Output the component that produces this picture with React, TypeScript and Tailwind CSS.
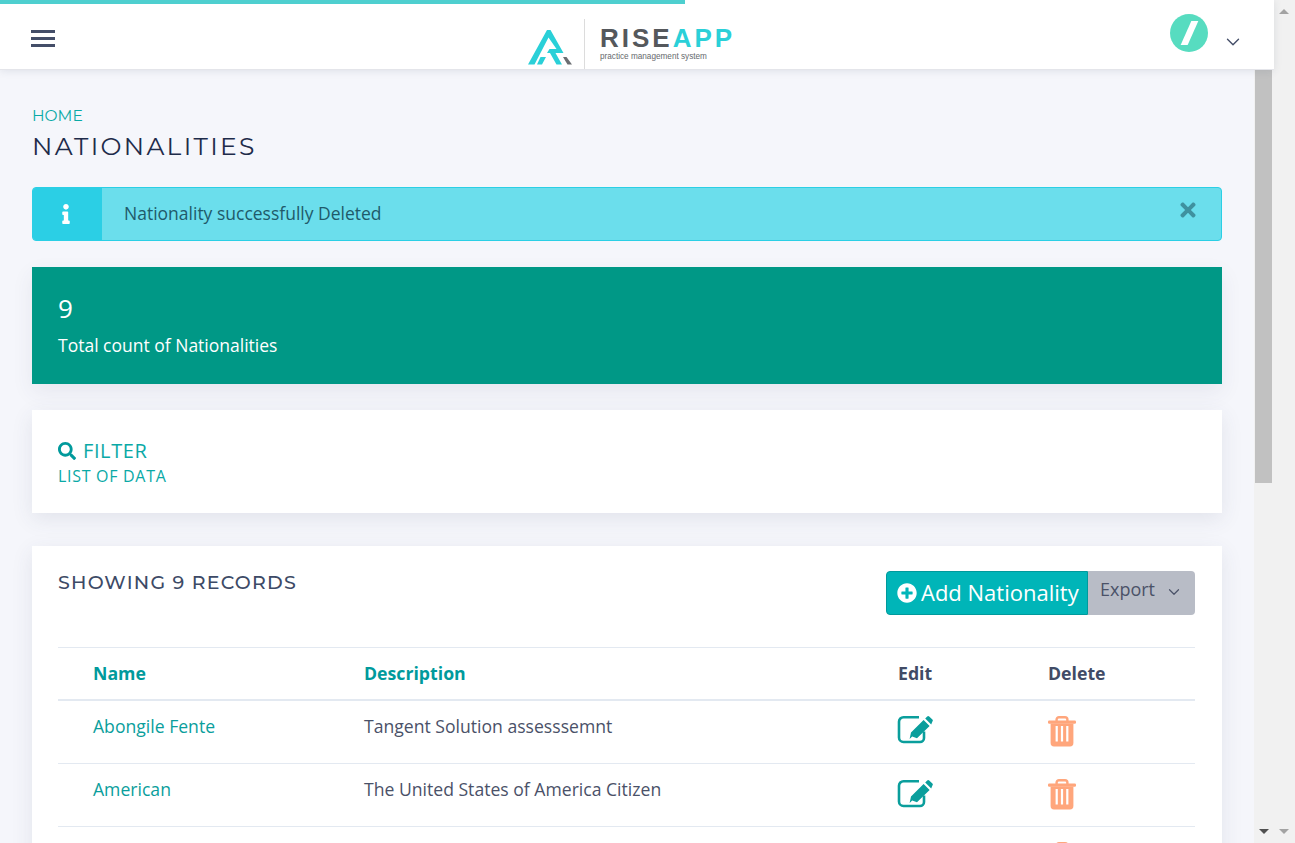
import { ChevronDown } from "lucide-react";
import { FaInfo, FaPlusCircle, FaSearch, FaTimes } from "react-icons/fa";

const rows = [
  { name: "Abongile Fente", description: "Tangent Solution assesssemnt" },
  { name: "American", description: "The United States of America Citizen" },
  { name: "", description: "" },
];

const EditIcon = () => (
  <svg width="36" height="30" viewBox="0 0 36 30" className="block ml-[-1px] mb-[3px]">
    <path d="M22 2.2 H6.5 a4.5 4.5 0 0 0 -4.5 4.5 V22.5 a4.5 4.5 0 0 0 4.5 4.5 H23 a4 4 0 0 0 4 -4 V16.5" fill="none" stroke="#0a9e9c" strokeWidth="2.6" />
    <path d="M12.6 24 L14 17.6 L26.6 5 L32.6 11 L20 23.2 L15.2 21.4 Z" fill="#0a9e9c" />
    <path d="M28.2 3.4 L30.2 1.4 a1.5 1.5 0 0 1 2 0 L35.4 4.6 a1.5 1.5 0 0 1 0 2 L34.2 9.4 Z" fill="#0a9e9c" />
  </svg>
);

const TrashIcon = () => (
  <svg width="28" height="31" viewBox="0 0 28 31" className="block mb-[1px]">
    <path d="M8.6 5 V3.6 a2.4 2.4 0 0 1 2.4 -2.4 h6 a2.4 2.4 0 0 1 2.4 2.4 V5" fill="none" stroke="#ffa67c" strokeWidth="2.4" />
    <rect x="0" y="4.4" width="28" height="3.4" rx="1.2" fill="#ffa67c" />
    <path d="M2.6 7.5 H25.4 V27 a3.4 3.4 0 0 1 -3.4 3.4 H6 a3.4 3.4 0 0 1 -3.4 -3.4 Z" fill="#ffa67c" />
    <rect x="7.6" y="10" width="2.2" height="15.5" fill="#fff" />
    <rect x="12.9" y="10" width="2.2" height="15.5" fill="#fff" />
    <rect x="18.2" y="10" width="2.2" height="15.5" fill="#fff" />
  </svg>
);

const Logo = () => (
  <div className="flex items-center h-[50px]">
    <svg width="44" height="36" viewBox="0 0 44 36" className="mt-[5px]">
      <path d="M0 35.5 L19 1 H22.5 L35.5 24 H19 L21.5 20 H28.5 L20.5 8.5 L6.5 35.5 Z" fill="#2ad0d8" />
      <path d="M22 24 H27.5 L34 35.5 H28.5 Z" fill="#2ad0d8" />
      <path d="M12.5 28 H18 L14 35.5 H9 Z" fill="#2ad0d8" />
      <path d="M35 28 H38.5 L44 35.5 H39.5 Z" fill="#6b6e72" />
    </svg>
    <div className="w-px h-[50px] bg-[#dcdcdc] ml-[12px] mr-[15px]" />
    <div className="flex flex-col mt-[-3px]">
      <div className="text-[26px] leading-[27px] font-bold tracking-[3px] font-['Liberation_Sans',sans-serif] text-[#55585c]">
        RISE<span className="text-[#2ad0d8]">APP</span>
      </div>
      <div className="text-[8.2px] leading-[9px] font-['Liberation_Sans',sans-serif] text-[#66696d]">practice management system</div>
    </div>
  </div>
);

const Scrollbar = ({ children }: { children?: React.ReactNode }) => (
  <div className="w-[21px] bg-[#f1f1f1] relative shrink-0">{children}</div>
);

const App = () => {
  return (
    <div className="h-[843px] w-[1295px] overflow-hidden flex font-['Open_Sans',sans-serif] relative">
      <div className="absolute top-0 left-0 h-1 w-[685px] bg-[#4ecfcf] z-10" />
      <div className="w-[1274px] flex flex-col shrink-0">
        <header className="h-[70px] bg-white flex items-center justify-between border-b border-[#e4e5ea] shadow-[0_1px_8px_rgba(60,70,100,0.12)] z-[5] shrink-0 relative">
          <div className="ml-[31px] flex flex-col gap-[4px] mt-[8px]">
            <span className="block w-6 h-[3px] bg-[#444e68]" />
            <span className="block w-6 h-[3px] bg-[#444e68]" />
            <span className="block w-6 h-[3px] bg-[#444e68]" />
          </div>
          <div className="absolute left-[528px] top-[19px]">
            <Logo />
          </div>
          <div className="flex items-start mr-[30px] mt-[-3px]">
            <div className="w-[38px] h-[38px] rounded-full bg-[#57dcc0] flex items-center justify-center">
              <div className="w-[7px] h-[24px] bg-white skew-x-[-24deg]" />
            </div>
            <ChevronDown className="w-[22px] h-[22px] text-[#444e68] ml-[14px] mt-[17px]" strokeWidth={1.5} />
          </div>
        </header>
        <div className="flex flex-1 min-h-0">
          <main className="w-[1254px] bg-[#f5f6fb] px-8 overflow-hidden">
            <div className="pt-[36px] text-[15.5px] leading-5 text-[#0aa9a6] font-['Montserrat','Inter',sans-serif]">HOME</div>
            <h1 className="mt-[4px] text-[25px] leading-[32px] tracking-[2.3px] text-[#1e2b4a] font-['Montserrat','Inter',sans-serif]">NATIONALITIES</h1>

            <div className="mt-[25px] h-[54px] flex rounded-[4px] border border-[#2bcfe5] bg-[#6bdeec] overflow-hidden">
              <div className="w-[69px] bg-[#2bcfe5] flex items-center justify-center shrink-0">
                <FaInfo className="text-white text-[20px] ml-[-3px]" />
              </div>
              <div className="flex-1 pl-[22px] pb-[2px] flex items-center text-[17.5px] text-[#1f5a6a]">Nationality successfully Deleted</div>
              <FaTimes className="text-[#3f919f] text-[22px] mr-[22px] mt-[11px]" />
            </div>

            <div className="mt-[26px] h-[117px] bg-[#009886] px-[26px] pt-[24px] text-white shadow-[0_8px_20px_rgba(60,70,100,0.08)]">
              <div className="text-[26px] leading-[35px]">9</div>
              <div className="mt-[6px] text-[17.5px] leading-[26px] font-medium">Total count of Nationalities</div>
            </div>

            <div className="mt-[26px] h-[103px] bg-white px-[26px] pt-[27px] shadow-[0_6px_20px_rgba(60,70,100,0.1)]">
              <div className="flex items-center gap-[7px] text-[#0aa9a6]">
                <FaSearch className="text-[18px] text-[#009a9c]" />
                <span className="text-[20px] leading-[28px] tracking-[0.6px]">FILTER</span>
              </div>
              <div className="text-[16px] leading-[22px] tracking-[0.7px] text-[#0aa9a6]">LIST OF DATA</div>
            </div>

            <div className="mt-[33px] bg-white pl-[26px] pr-[27px] pt-[25px] h-[400px] shadow-[0_6px_20px_rgba(60,70,100,0.1)]">
              <div className="flex items-start justify-between">
                <h2 className="text-[19px] leading-6 tracking-[1.2px] font-medium text-[#3d4a66] font-['Montserrat','Inter',sans-serif]">SHOWING 9 RECORDS</h2>
                <div className="flex h-[44px]">
                  <button className="w-[202px] flex items-center pl-[10px] pb-[2px] gap-[4px] rounded-l-[4px] border border-[#009a9c] bg-[#00b5b8] text-white text-[22px] leading-none">
                    <FaPlusCircle className="text-[20px] mt-[2px]" />
                    Add Nationality
                  </button>
                  <button className="w-[107px] flex items-start pl-[12px] pt-[5px] rounded-r-[4px] bg-[#b8bcc6] text-[#4b5268] text-[18px]">
                    Export
                    <ChevronDown className="w-[18px] h-[18px] ml-[10px] mt-[7px]" strokeWidth={1.6} />
                  </button>
                </div>
              </div>

              <table className="mt-[32px] w-[1137px] table-fixed border-t border-[#e3e9f1]">
                <thead>
                  <tr className="h-[52px] border-b-2 border-[#e3e9f1] text-[17.7px] text-left">
                    <th className="w-[306px] pl-[35px] font-bold text-[#009a9c]">Name</th>
                    <th className="w-[534px] font-bold text-[#009a9c]">Description</th>
                    <th className="w-[150px] font-bold text-[#414b66]">Edit</th>
                    <th className="font-bold text-[#414b66]">Delete</th>
                  </tr>
                </thead>
                <tbody>
                  {rows.map((row, i) => (
                    <tr key={i} className={i === 0 ? "h-[64px] border-b border-[#e3e9f1] text-[17.6px]" : "h-[63px] border-b border-[#e3e9f1] text-[17.6px]"}>
                      <td className={i === 0 ? "pl-[35px] text-[#0a9e9c] pb-[12px]" : "pl-[35px] text-[#0a9e9c] pb-[11px]"}>{row.name}</td>
                      <td className={i === 0 ? "text-[#4a5168] pb-[12px]" : "text-[#4a5168] pb-[11px]"}>{row.description}</td>
                      <td><EditIcon /></td>
                      <td><TrashIcon /></td>
                    </tr>
                  ))}
                </tbody>
              </table>
            </div>
          </main>
          <div className="w-5 bg-[#f1f1f1] relative shrink-0">
            <div className="ml-px w-[17px] h-[413px] bg-[#c1c1c1]" />
            <div className="absolute left-[5px] bottom-[9px] w-0 h-0 border-x-[5px] border-x-transparent border-t-[5px] border-t-[#505050]" />
          </div>
        </div>
      </div>
      <Scrollbar>
        <div className="absolute left-[5px] top-[9px] w-0 h-0 border-x-[5px] border-x-transparent border-b-[5px] border-b-[#a3a3a3]" />
        <div className="absolute left-[5px] bottom-[9px] w-0 h-0 border-x-[5px] border-x-transparent border-t-[5px] border-t-[#a3a3a3]" />
      </Scrollbar>
    </div>
  );
};

export default App;
